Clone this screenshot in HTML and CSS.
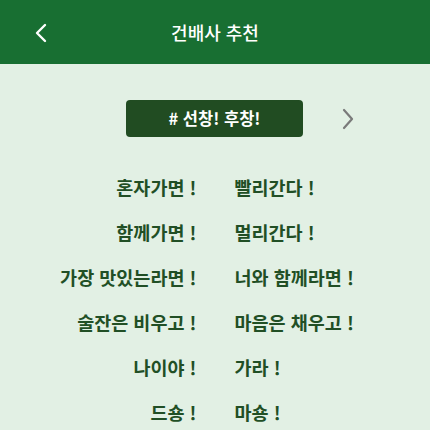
FILE: index.html
```html
<!DOCTYPE html>
<html lang="ko">
<head>
<meta charset="utf-8">
<link rel="stylesheet" href="styles.css">
</head>
<body>
<header class="appbar">
  <svg class="back" width="14" height="20" viewBox="0 0 14 20"><path d="M11 2 L3 10 L11 18" fill="none" stroke="#fff" stroke-width="2.4" stroke-linecap="round" stroke-linejoin="round"/></svg>
  <h1 class="title">건배사 추천</h1>
</header>
<main class="content">
  <div class="tagrow">
    <div class="tag"># 선창! 후창!</div>
    <svg class="next" width="14" height="22" viewBox="0 0 14 22"><path d="M3 2 L11 11 L3 20" fill="none" stroke="#7a7a7a" stroke-width="2.2" stroke-linecap="round" stroke-linejoin="round"/></svg>
  </div>
  <div class="toasts">
    <span class="l">혼자가면 !</span><span class="r">빨리간다 !</span>
    <span class="l">함께가면 !</span><span class="r">멀리간다 !</span>
    <span class="l">가장 맛있는라면 !</span><span class="r">너와 함께라면 !</span>
    <span class="l">술잔은 비우고 !</span><span class="r">마음은 채우고 !</span>
    <span class="l">나이야 !</span><span class="r">가라 !</span>
    <span class="l">드숑 !</span><span class="r">마숑 !</span>
  </div>
</main>
</body>
</html>
```
FILE: styles.css
```css
html, body {
  margin: 0;
  padding: 0;
}
body {
  width: 430px;
  height: 430px;
  overflow: hidden;
  background: #e2f0e4;
  font-family: "Noto Sans CJK KR", "Noto Sans", sans-serif;
}
.appbar {
  position: relative;
  height: 64px;
  background: #186f32;
  display: flex;
  align-items: center;
  justify-content: center;
}
.back {
  position: absolute;
  left: 34px;
  top: 23px;
}
.title {
  margin: 0;
  color: #fff;
  font-size: 18px;
  font-weight: 500;
  line-height: 1;
}
.content {
  padding-top: 36px;
}
.tagrow {
  display: flex;
  align-items: center;
  padding-left: 126px;
}
.tag {
  width: 177px;
  height: 37px;
  background: #214c22;
  border-radius: 4px;
  color: #fff;
  font-size: 16.5px;
  font-weight: 700;
  display: flex;
  align-items: center;
  justify-content: center;
  line-height: 1;
}
.next {
  margin-left: 38px;
}
.toasts {
  display: grid;
  grid-template-columns: 1fr 1fr;
  column-gap: 38px;
  row-gap: 19px;
  margin-top: 37px;
  padding-left: 1px;
  color: #214f25;
  font-size: 18.5px;
  font-weight: 700;
  line-height: 26px;
}
.l {
  text-align: right;
}
.r {
  text-align: left;
}
```
